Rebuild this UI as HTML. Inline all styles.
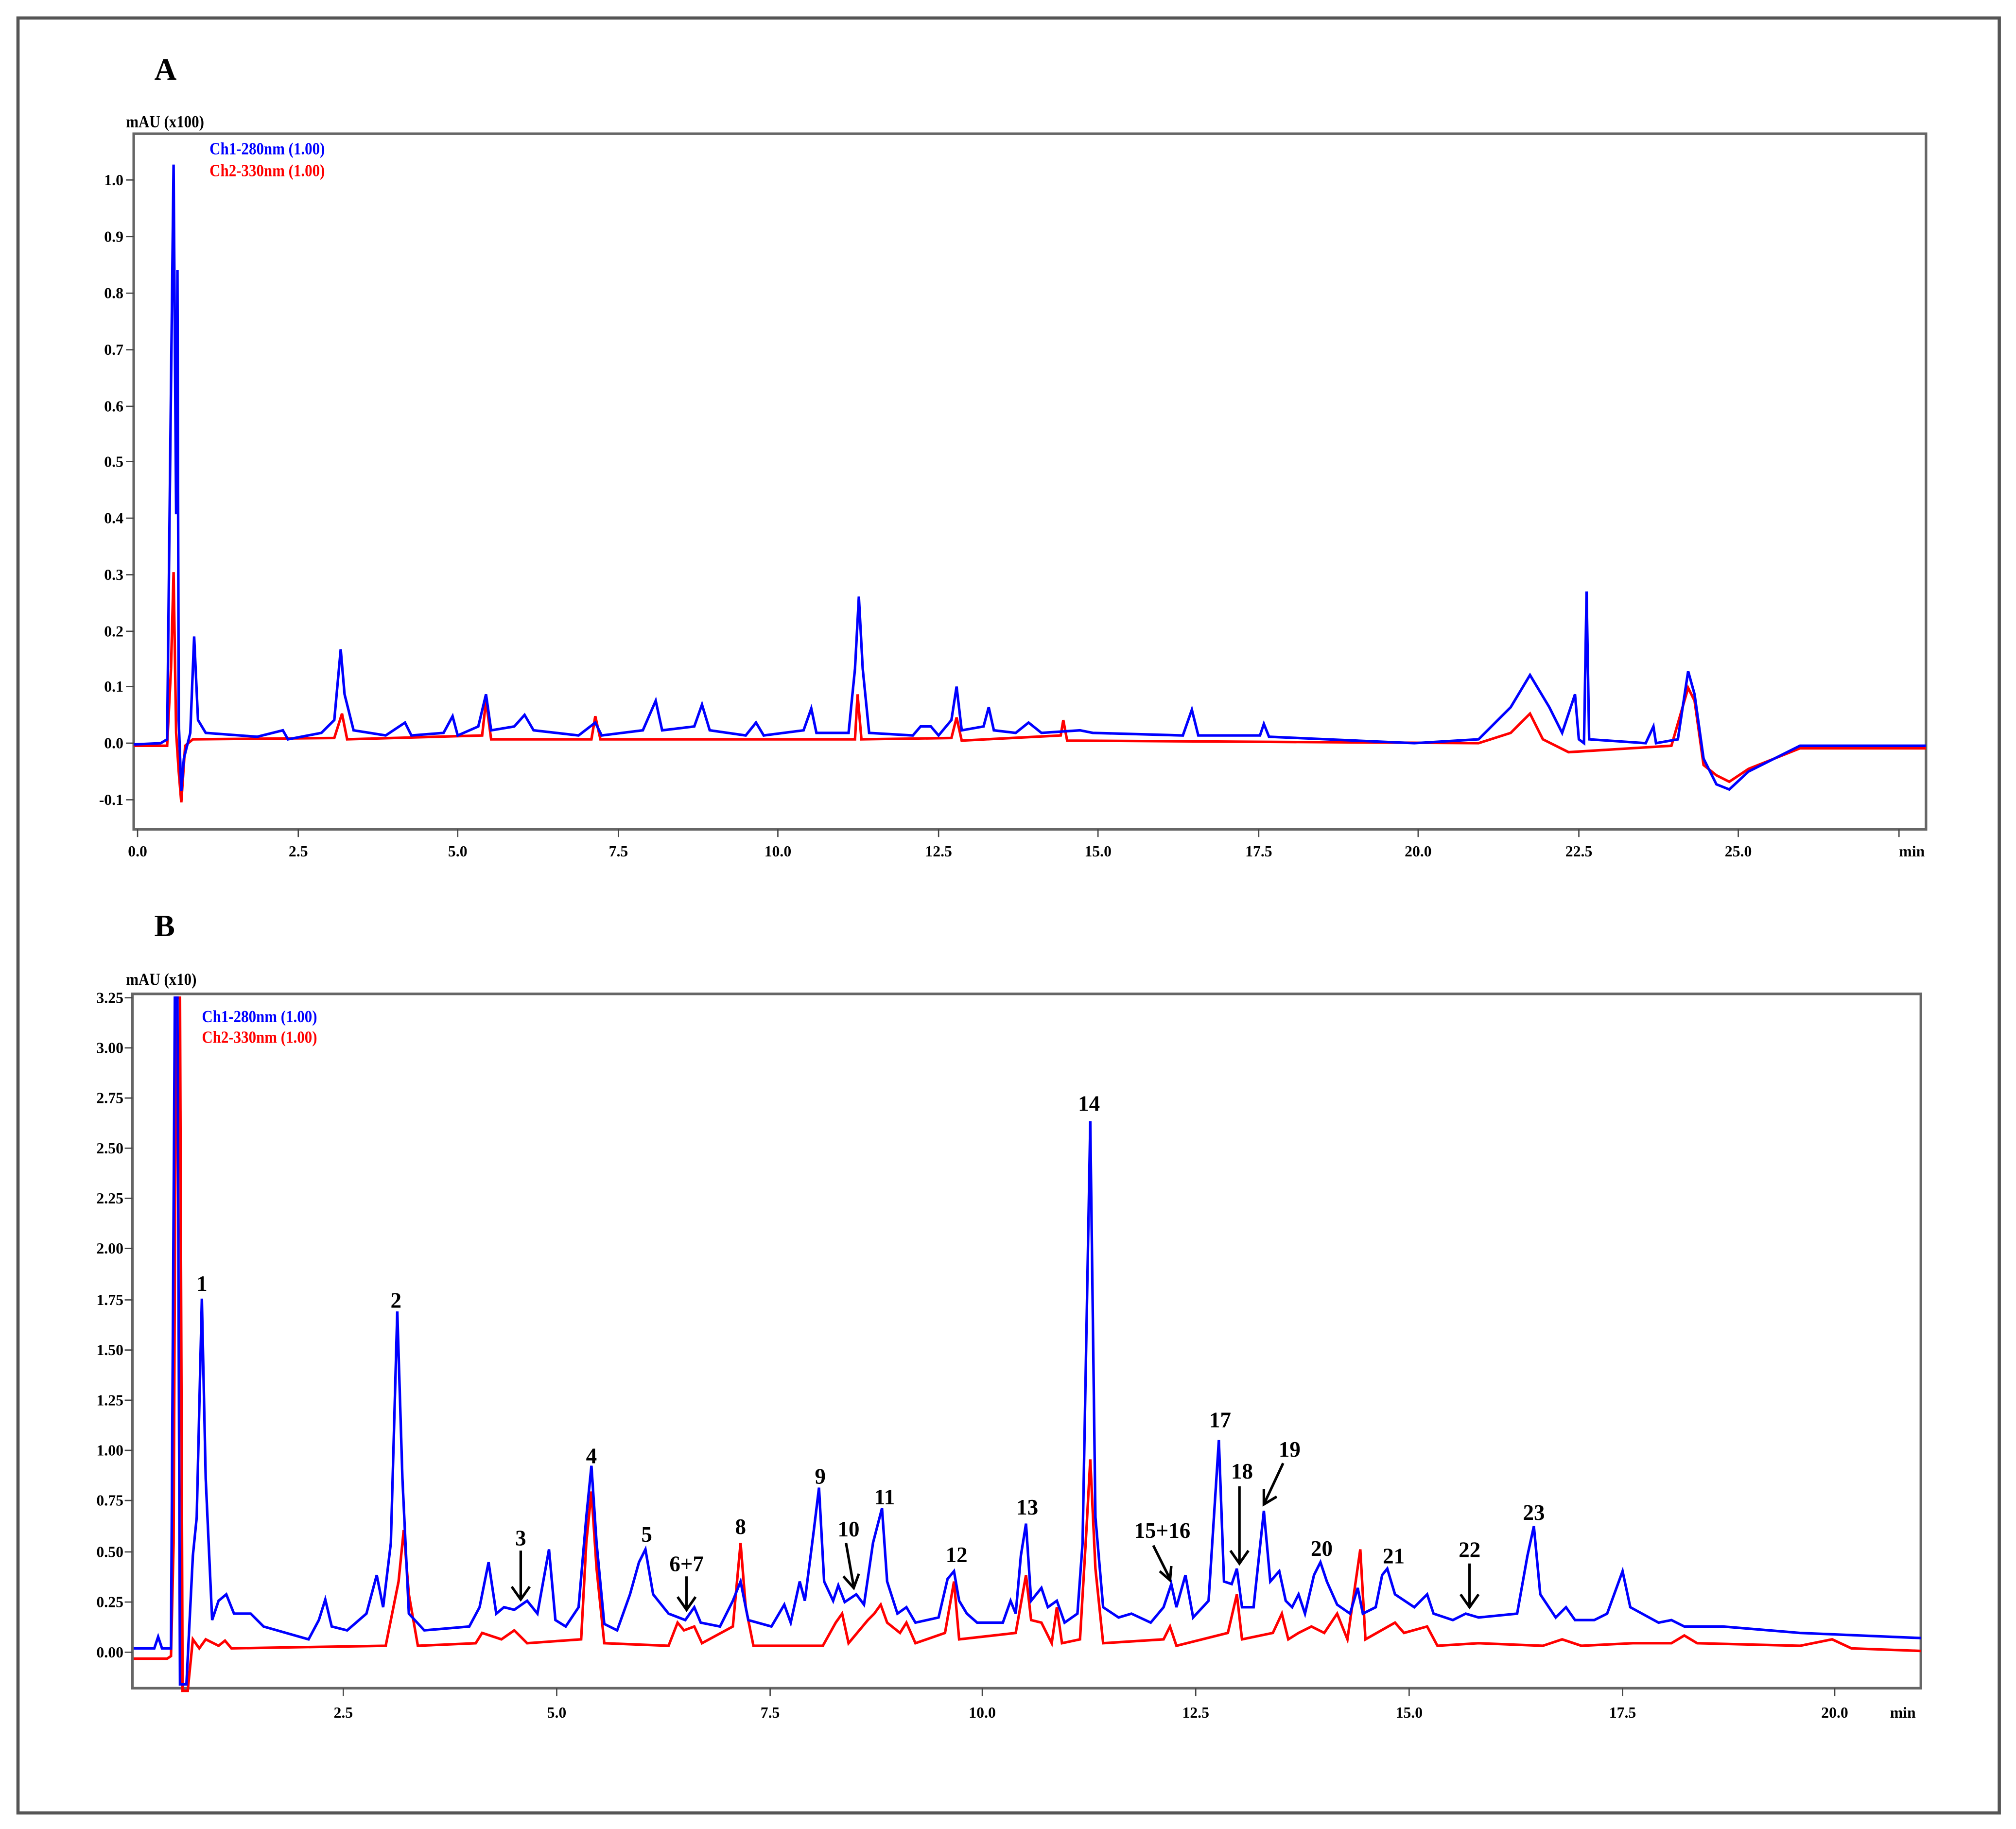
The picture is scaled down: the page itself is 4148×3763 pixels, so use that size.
<!DOCTYPE html>
<html><head><meta charset="utf-8"><style>
html,body{margin:0;padding:0;background:#fff;}
svg{display:block;}
text{font-family:"Liberation Serif",serif;font-weight:bold;}
</style></head><body>
<svg width="4148" height="3763" viewBox="0 0 1568 1422.5" preserveAspectRatio="none" xmlns="http://www.w3.org/2000/svg">
<rect x="0" y="0" width="1568" height="1423" fill="#fff"/>
<rect x="14" y="14" width="1541" height="1396" fill="none" stroke="#555" stroke-width="2.5"/>

<!-- Panel A -->
<text x="120" y="62" font-size="24">A</text>
<text x="98" y="99" font-size="13" transform="translate(98 99) scale(0.9 1) translate(-98 -99)">mAU (x100)</text>
<rect x="104" y="104" width="1394" height="541" fill="none" stroke="#666" stroke-width="2"/>
<text x="163" y="120" font-size="13" fill="#0000ff" transform="translate(163 120) scale(0.9 1) translate(-163 -120)">Ch1-280nm (1.00)</text>
<text x="163" y="137" font-size="13" fill="#ff0000" transform="translate(163 137) scale(0.9 1) translate(-163 -137)">Ch2-330nm (1.00)</text>
<g font-size="12" text-anchor="end">
<text x="96" y="144">1.0</text><text x="96" y="188">0.9</text><text x="96" y="232">0.8</text><text x="96" y="276">0.7</text><text x="96" y="320">0.6</text><text x="96" y="363">0.5</text><text x="96" y="407">0.4</text><text x="96" y="451">0.3</text><text x="96" y="495">0.2</text><text x="96" y="538">0.1</text><text x="96" y="582">0.0</text><text x="96" y="626">-0.1</text>
</g>
<g stroke="#444" stroke-width="1">
<path d="M98 140h6M98 184h6M98 228h6M98 272h6M98 316h6M98 359h6M98 403h6M98 447h6M98 491h6M98 534h6M98 578h6M98 622h6"/>
<path d="M107 645v6M232 645v6M356 645v6M481 645v6M605 645v6M730 645v6M854 645v6M979 645v6M1103 645v6M1228 645v6M1352 645v6M1477 645v6"/>
</g>
<g font-size="12" text-anchor="middle">
<text x="107" y="666">0.0</text><text x="232" y="666">2.5</text><text x="356" y="666">5.0</text><text x="481" y="666">7.5</text><text x="605" y="666">10.0</text><text x="730" y="666">12.5</text><text x="854" y="666">15.0</text><text x="979" y="666">17.5</text><text x="1103" y="666">20.0</text><text x="1228" y="666">22.5</text><text x="1352" y="666">25.0</text><text x="1487" y="666">min</text>
</g>
<polyline fill="none" stroke="#ff0000" stroke-width="2" points="104,580 130,580 133,520 135,445 137,570 139,600 141,624 144,580 150,575 260,574 266,555 270,575 375,572 378,545 382,575 460,575 463,557 467,575 665,575 667,540 670,575 740,574 744,558 748,576 825,572 827,560 830,576 1150,578 1175,570 1190,555 1200,575 1220,585 1300,580 1313,535 1318,545 1325,595 1335,603 1345,608 1360,598 1400,582 1498,582"/>
<polyline fill="none" stroke="#0000ff" stroke-width="2" points="104,579 125,578 130,575 133,300 135,128 137,400 138,210 139,560 141,615 143,590 148,570 151,495 154,560 160,570 200,573 220,568 224,575 250,570 260,560 265,505 268,540 275,568 300,572 315,562 320,572 345,570 352,557 356,572 372,565 378,540 382,568 400,565 408,556 415,568 450,572 463,562 468,572 500,568 510,545 515,568 540,565 546,548 552,568 580,572 588,562 594,572 625,568 631,551 635,570 660,570 665,520 668,464 671,520 676,570 710,572 716,565 724,565 730,572 740,560 744,534 748,568 765,565 769,550 773,568 790,570 800,562 810,570 840,568 850,570 920,572 927,552 932,572 980,572 983,563 987,573 1100,578 1150,575 1175,550 1190,525 1205,550 1215,570 1225,540 1228,575 1232,578 1234,460 1236,575 1280,578 1286,565 1288,578 1305,575 1313,522 1318,540 1325,590 1335,610 1345,614 1360,600 1400,580 1440,580 1498,580"/>

<!-- Panel B -->
<text x="120" y="728" font-size="24">B</text>
<text x="98" y="766" font-size="13" transform="translate(98 766) scale(0.9 1) translate(-98 -766)">mAU (x10)</text>
<rect x="103" y="773" width="1391" height="540" fill="none" stroke="#666" stroke-width="2"/>
<text x="157" y="795" font-size="13" fill="#0000ff" transform="translate(157 795) scale(0.9 1) translate(-157 -795)">Ch1-280nm (1.00)</text>
<text x="157" y="811" font-size="13" fill="#ff0000" transform="translate(157 811) scale(0.9 1) translate(-157 -811)">Ch2-330nm (1.00)</text>
<g font-size="12" text-anchor="end">
<text x="96" y="780">3.25</text><text x="96" y="819">3.00</text><text x="96" y="858">2.75</text><text x="96" y="897">2.50</text><text x="96" y="936">2.25</text><text x="96" y="975">2.00</text><text x="96" y="1015">1.75</text><text x="96" y="1054">1.50</text><text x="96" y="1093">1.25</text><text x="96" y="1132">1.00</text><text x="96" y="1171">0.75</text><text x="96" y="1211">0.50</text><text x="96" y="1250">0.25</text><text x="96" y="1289">0.00</text>
</g>
<g stroke="#444" stroke-width="1">
<path d="M97 776h6M97 815h6M97 854h6M97 893h6M97 932h6M97 971h6M97 1011h6M97 1050h6M97 1089h6M97 1128h6M97 1167h6M97 1207h6M97 1246h6M97 1285h6"/>
<path d="M267 1313v6M433 1313v6M599 1313v6M764 1313v6M930 1313v6M1096 1313v6M1262 1313v6M1427 1313v6"/>
</g>
<g font-size="12" text-anchor="middle">
<text x="267" y="1336">2.5</text><text x="433" y="1336">5.0</text><text x="599" y="1336">7.5</text><text x="764" y="1336">10.0</text><text x="930" y="1336">12.5</text><text x="1096" y="1336">15.0</text><text x="1262" y="1336">17.5</text><text x="1427" y="1336">20.0</text><text x="1480" y="1336">min</text>
</g>
<polyline fill="none" stroke="#ff0000" stroke-width="2" points="104,1290 130,1290 133,1288 135,1200 137,776 140,776 142,1315 146,1315 150,1275 155,1282 160,1275 170,1280 175,1276 180,1282 300,1280 310,1230 314,1190 318,1240 325,1280 370,1278 375,1270 390,1275 400,1268 410,1278 452,1275 456,1200 460,1160 464,1220 470,1278 520,1280 527,1262 532,1268 540,1265 546,1278 570,1265 576,1200 580,1250 586,1280 640,1280 650,1262 655,1255 660,1278 675,1260 680,1255 685,1248 690,1262 700,1270 705,1262 712,1278 735,1270 742,1230 746,1275 790,1270 798,1225 802,1260 810,1262 818,1278 822,1250 826,1278 840,1275 845,1190 848,1135 852,1220 858,1278 905,1275 910,1265 915,1280 955,1270 962,1240 966,1275 990,1270 997,1255 1002,1275 1010,1270 1020,1265 1030,1270 1040,1255 1048,1275 1058,1205 1062,1275 1085,1262 1092,1270 1110,1265 1118,1280 1150,1278 1200,1280 1215,1275 1230,1280 1270,1278 1300,1278 1310,1272 1320,1278 1400,1280 1425,1275 1440,1282 1494,1284"/>
<polyline fill="none" stroke="#0000ff" stroke-width="2" points="104,1282 120,1282 123,1273 126,1282 133,1282 136,776 138,776 140,1310 145,1310 150,1210 153,1180 157,1010 160,1150 165,1260 170,1245 176,1240 182,1255 195,1255 205,1265 240,1275 248,1260 253,1244 258,1265 270,1268 285,1255 293,1225 298,1250 304,1200 309,1020 313,1150 318,1255 330,1268 365,1265 373,1250 380,1215 386,1255 392,1250 400,1252 410,1245 418,1255 427,1205 432,1260 440,1265 450,1250 456,1180 460,1140 464,1200 470,1263 480,1268 490,1240 497,1215 502,1205 508,1240 520,1255 533,1260 540,1250 545,1262 560,1265 570,1245 576,1230 582,1260 600,1265 610,1248 615,1262 622,1230 626,1245 633,1190 637,1157 641,1230 648,1245 652,1233 657,1246 666,1240 672,1248 679,1200 686,1173 690,1230 698,1255 705,1250 712,1262 730,1258 737,1228 742,1222 746,1245 752,1255 760,1262 780,1262 786,1245 790,1255 794,1210 798,1185 802,1245 810,1235 815,1250 822,1245 828,1262 838,1255 842,1200 848,872 852,1180 858,1250 870,1258 880,1255 895,1262 905,1250 911,1232 915,1250 922,1225 928,1258 940,1245 948,1120 952,1230 958,1232 962,1220 966,1250 975,1250 983,1175 988,1230 995,1222 1000,1245 1005,1250 1010,1240 1015,1255 1022,1225 1027,1215 1032,1230 1040,1248 1050,1255 1056,1235 1060,1255 1070,1250 1075,1225 1079,1220 1085,1240 1100,1250 1110,1240 1115,1255 1130,1260 1140,1255 1150,1258 1180,1255 1188,1210 1193,1187 1198,1240 1210,1258 1218,1250 1225,1260 1240,1260 1250,1255 1262,1222 1268,1250 1290,1262 1300,1260 1310,1265 1340,1265 1400,1270 1494,1274"/>

<!-- peak labels -->
<g font-size="17" text-anchor="middle">
<text x="157" y="1004">1</text><text x="308" y="1017">2</text><text x="405" y="1202">3</text><text x="460" y="1138">4</text><text x="503" y="1199">5</text><text x="534" y="1222">6+7</text><text x="576" y="1193">8</text><text x="638" y="1154">9</text><text x="660" y="1195">10</text><text x="688" y="1170">11</text><text x="744" y="1215">12</text><text x="799" y="1178">13</text><text x="847" y="864">14</text><text x="904" y="1196">15+16</text><text x="949" y="1110">17</text><text x="966" y="1150">18</text><text x="1003" y="1133">19</text><text x="1028" y="1210">20</text><text x="1084" y="1216">21</text><text x="1143" y="1211">22</text><text x="1193" y="1182">23</text>
</g>
<g stroke="#000" stroke-width="2" fill="none">
<path d="M405 1206v38M398 1234l7 10 7-10"/>
<path d="M534 1226v26M527 1242l7 10 7-10"/>
<path d="M658 1200l6 34M656 1226l8 9 4-11"/>
<path d="M897 1202l13 26M902 1222l8 7 1-11"/>
<path d="M964 1156v60M957 1206l7 10 7-10"/>
<path d="M998 1138l-15 32M983 1158l0 12 10-6"/>
<path d="M1143 1216v34M1136 1240l7 10 7-10"/>
</g>
</svg>
</body></html>
